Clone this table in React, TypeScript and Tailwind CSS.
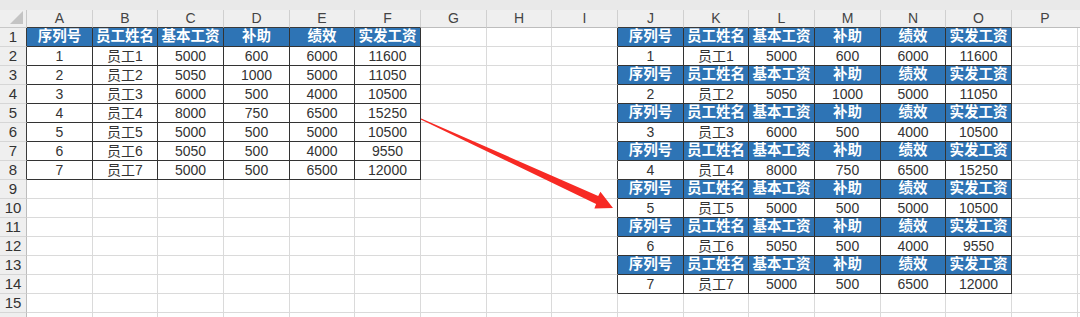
import React from 'react';

const COLS = ['A', 'B', 'C', 'D', 'E', 'F', 'G', 'H', 'I', 'J', 'K', 'L', 'M', 'N', 'O'];
const WIDTHS = ['w-[66px]', 'w-[65px]', 'w-[66px]'];
const HEAD = ['序列号', '员工姓名', '基本工资', '补助', '绩效', '实发工资'];
const ROWS = [
  ['1', '员工1', '5000', '600', '6000', '11600'],
  ['2', '员工2', '5050', '1000', '5000', '11050'],
  ['3', '员工3', '6000', '500', '4000', '10500'],
  ['4', '员工4', '8000', '750', '6500', '15250'],
  ['5', '员工5', '5000', '500', '5000', '10500'],
  ['6', '员工6', '5050', '500', '4000', '9550'],
  ['7', '员工7', '5000', '500', '6500', '12000'],
];

type Cell = { text: string; head: boolean } | null;

// r is the sheet row (1-based), c the column index (0 = A)
function cellAt(r: number, c: number): Cell {
  if (c >= 0 && c <= 5 && r >= 1 && r <= 8) {
    if (r === 1) return { text: HEAD[c], head: true };
    return { text: ROWS[r - 2][c], head: false };
  }
  if (c >= 9 && c <= 14 && r >= 1 && r <= 14) {
    const k = c - 9;
    if (r % 2 === 1) return { text: HEAD[k], head: true };
    return { text: ROWS[r / 2 - 1][k], head: false };
  }
  return null;
}

const inTable = (r: number, c: number) => cellAt(r, c) !== null;

function ColumnHeader() {
  return (
    <div className="flex h-[18px] bg-[#efefef] text-[14px] text-[#444]">
      <div className="w-[27px] h-full shrink-0 border-r border-b border-[#c8c8c8] relative">
        <div
          className="absolute right-[3px] bottom-[3px] w-0 h-0 border-l-[13px] border-l-transparent border-b-[13px] border-b-[#c4c4c4]"
        />
      </div>
      {COLS.map((c, i) => (
        <div
          key={c}
          className={`${WIDTHS[i % 3]} shrink-0 h-full flex items-center justify-center border-r border-r-[#d0d0d0] border-b ${
            inTable(1, i) ? 'border-b-[#3a3a3a]' : 'border-b-[#bdbdbd]'
          }`}
        >
          {c}
        </div>
      ))}
      <div className="flex-1 h-full flex items-center justify-center pr-[2px] border-b border-b-[#bdbdbd]">
        <span className="w-[66px] text-center">P</span>
      </div>
    </div>
  );
}

function SheetRow({ r }: { r: number }) {
  return (
    <div className="flex h-[19px] text-[14px]">
      <div
        className={`w-[27px] shrink-0 h-full bg-[#efefef] text-[#333] text-[15px] flex items-center justify-center border-b border-b-[#d6d6d6] border-r ${
          inTable(r, 0) ? 'border-r-[#3a3a3a]' : 'border-r-[#bdbdbd]'
        }`}
      >
        {r}
      </div>
      {COLS.map((_, c) => {
        const cell = cellAt(r, c);
        const darkR = inTable(r, c) || inTable(r, c + 1);
        const darkB = inTable(r, c) || inTable(r + 1, c);
        return (
          <div
            key={c}
            className={`${WIDTHS[c % 3]} shrink-0 h-full flex items-center justify-center border-r border-b whitespace-nowrap overflow-hidden ${
              darkR ? 'border-r-[#333]' : 'border-r-[#dadada]'
            } ${darkB ? 'border-b-[#333]' : 'border-b-[#dadada]'} ${
              cell?.head ? 'bg-[#2e74b5] text-white font-bold text-[14.5px]' : 'bg-white text-[#333]'
            }`}
          >
            {cell?.text}
          </div>
        );
      })}
      <div className="flex-1 h-full border-b border-b-[#dadada] bg-white">
        <div className="w-[66px] h-full border-r border-r-[#dadada]" />
      </div>
    </div>
  );
}

function Arrow() {
  return (
    <svg className="absolute left-0 top-0 pointer-events-none" width="1080" height="317" viewBox="0 0 1080 317">
      <polygon
        fill="#f72a24"
        points="421.3,118.4 598.2,195.9 600.4,191.8 613,208 594.4,208.4 596.1,203.9 420.7,119.6"
      />
    </svg>
  );
}

export default function App() {
  const rows = Array.from({ length: 16 }, (_, i) => i + 1);
  return (
    <div
      className="relative w-[1080px] h-[317px] overflow-hidden bg-white"
      style={{ fontFamily: '"Liberation Sans", "Noto Sans CJK SC", sans-serif' }}
    >
      <div className="h-[10px] bg-[#e9e9e9]" />
      <ColumnHeader />
      {rows.map((r) => (
        <SheetRow key={r} r={r} />
      ))}
      <Arrow />
    </div>
  );
}
